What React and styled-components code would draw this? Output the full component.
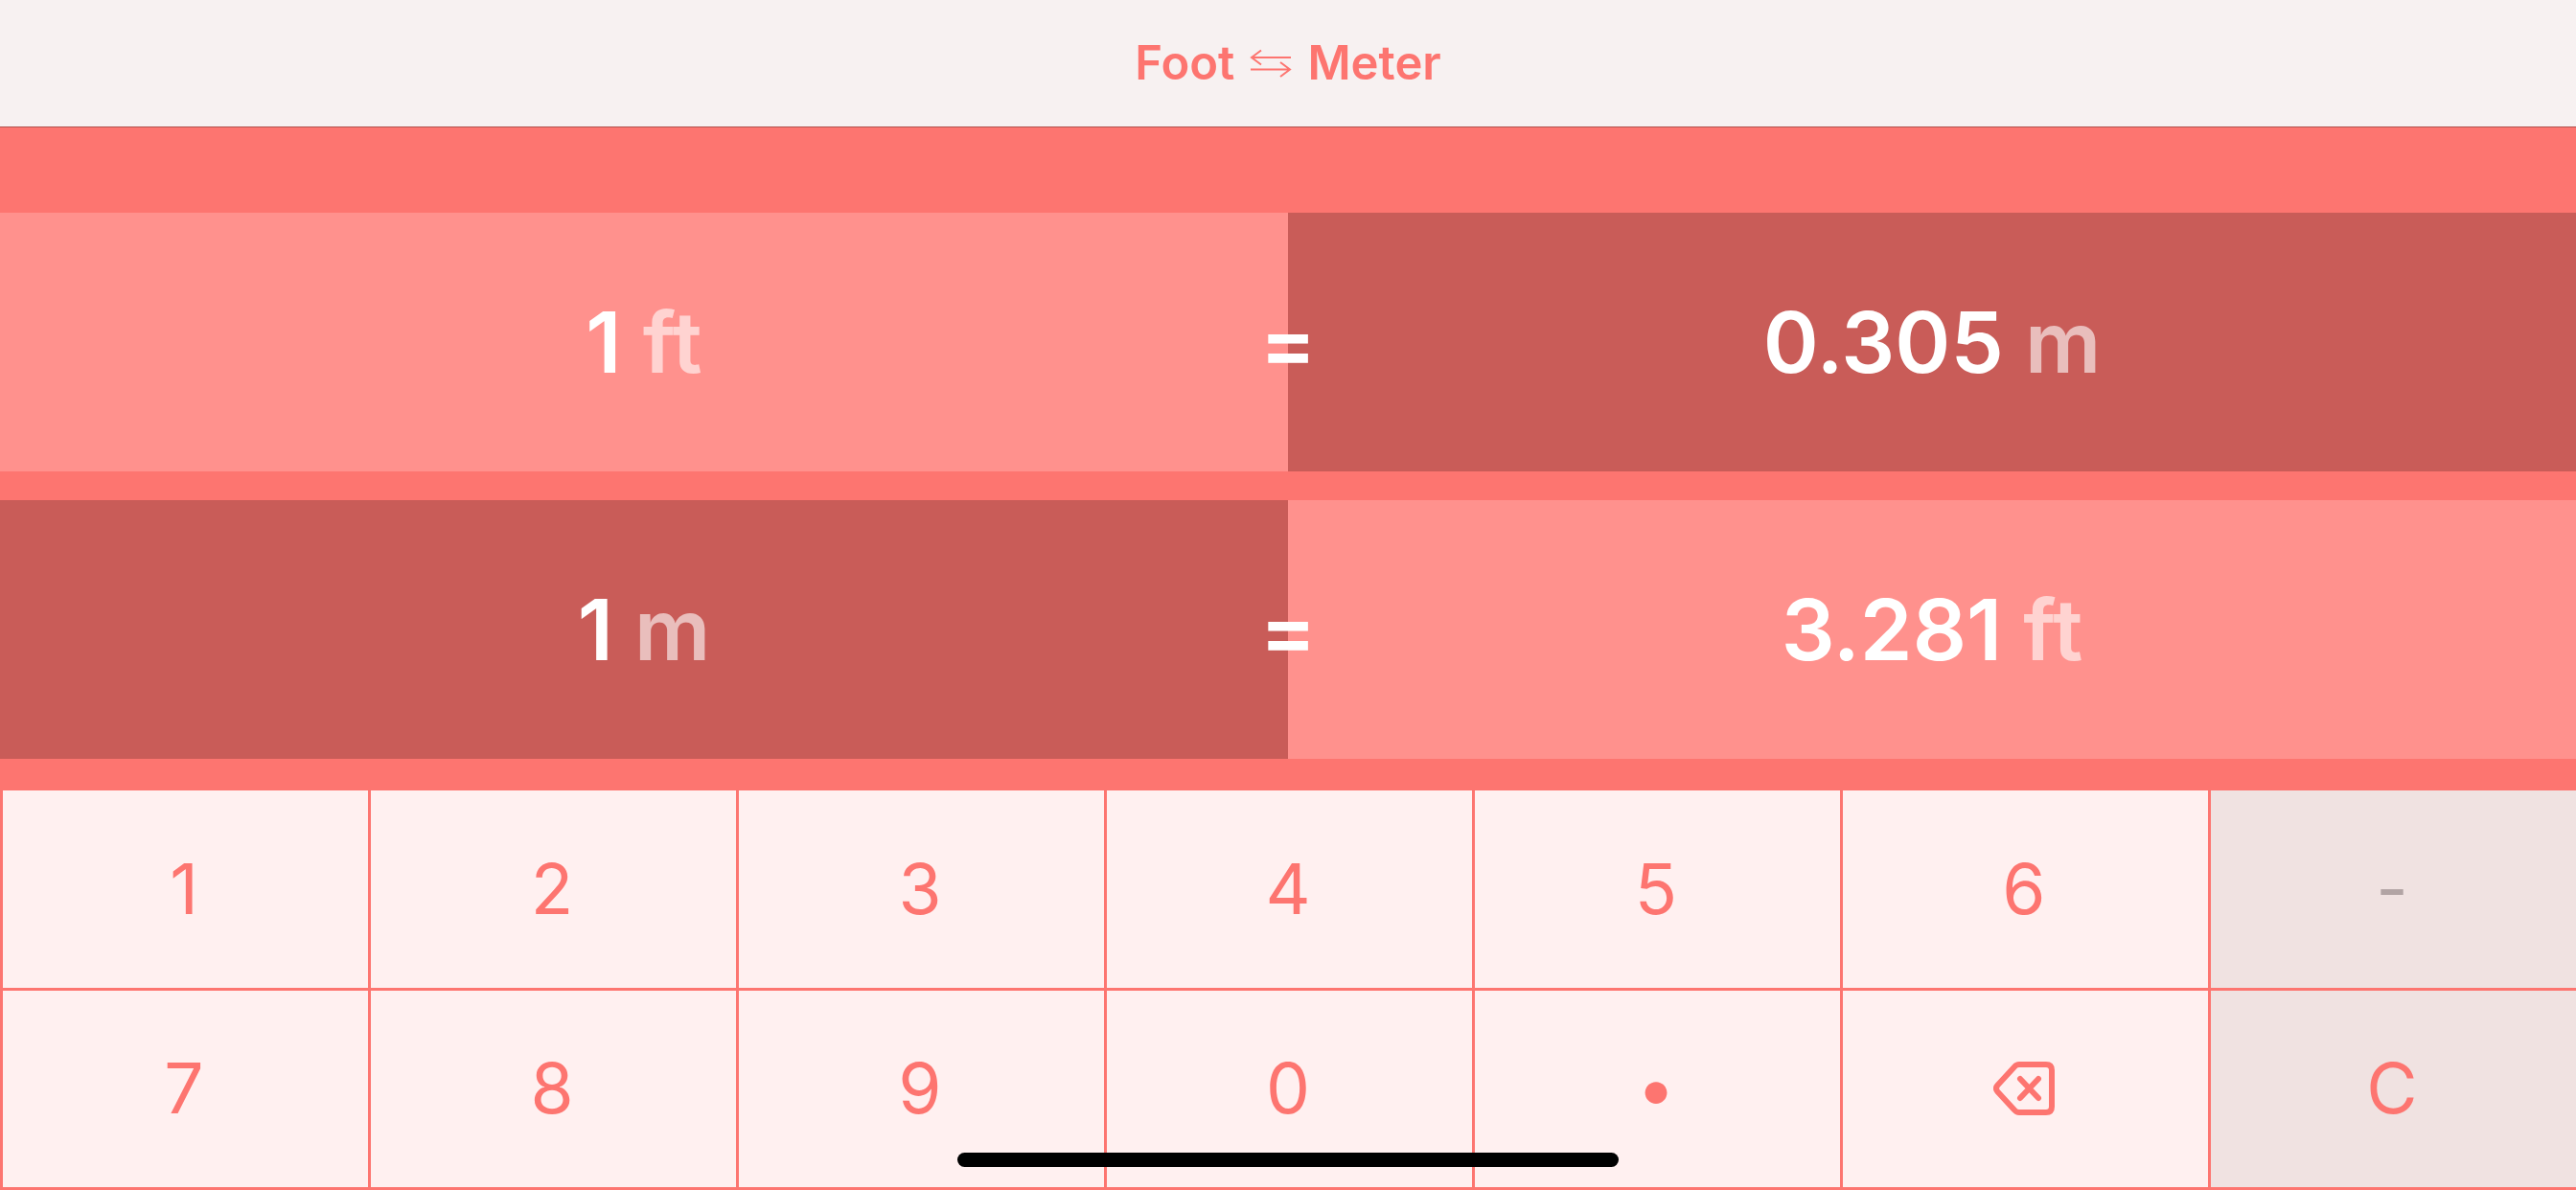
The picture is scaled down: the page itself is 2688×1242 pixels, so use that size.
import React, { useState } from 'react'
import styled, { createGlobalStyle } from 'styled-components'

const METERS_PER_FOOT = 0.3048

const GlobalStyle = createGlobalStyle`
	* {
		box-sizing: border-box;
	}
	body {
		margin: 0;
		background: #fd7570;
		font-family: Inter, 'Liberation Sans', sans-serif;
	}
`

const Page = styled.div`
	position: relative;
	min-height: 100vh;
	display: flex;
	flex-direction: column;
	background: #fd7570;
`

const Header = styled.header`
	display: flex;
	justify-content: center;
	padding: 36px;
	background: #f7f1f1;
	border-bottom: 1px solid #b1524e;
`

const Title = styled.h1`
	display: flex;
	align-items: center;
	gap: 16px;
	margin: 0;
	font-size: 49px;
	line-height: 60px;
	font-weight: 600;
	color: #fd7570;
`

const Conversions = styled.main`
	display: flex;
	flex-direction: column;
	gap: 30px;
	padding: 89px 0 30px;
`

const Equation = styled.section`
	position: relative;
	display: grid;
	grid-template-columns: 1fr 1fr;
	font-size: 88px;
	line-height: 110px;
	font-weight: 600;
	color: #fff;
`

const Side = styled.div`
	padding: 80px 0;
	text-align: center;
	background: ${({ $dark }) => ($dark ? '#c95c58' : '#ff918d')};
`

const Unit = styled.span`
	color: rgba(255, 255, 255, 0.6);
`

const Equals = styled.span`
	position: absolute;
	inset: 0;
	display: flex;
	align-items: center;
	justify-content: center;
	pointer-events: none;
`

const Keypad = styled.div`
	flex: 1;
	display: grid;
	grid-template-columns: repeat(7, 1fr);
	grid-auto-rows: 1fr;
	border-top: 3px solid #fd7570;
`

const Key = styled.button`
	display: flex;
	align-items: center;
	justify-content: center;
	margin: 0;
	padding: 0 3px 0 0;
	border: 0 solid #fd7570;
	border-width: 0 0 3px 3px;
	background: ${({ $muted }) => ($muted ? '#f0e2e1' : '#fff0f0')};
	font-family: inherit;
	font-size: 73px;
	line-height: 90px;
	font-weight: 400;
	color: #fd7570;
	cursor: pointer;
	&:disabled {
		color: #b2a4a4;
		cursor: default;
	}
`

const HomeIndicator = styled.div`
	position: absolute;
	left: 50%;
	bottom: 24px;
	width: 690px;
	height: 15px;
	margin-left: -345px;
	border-radius: 8px;
	background: #000;
`

function SwapIcon() {
	return (
		<svg width="44" height="30" viewBox="0 0 44 30" fill="none" stroke="currentColor" strokeWidth="2" role="img" aria-label="to and from">
			<path d="M43 9H2M12 1.500L2 9l10 7.500" />
			<path d="M1 21.500h41M32 14l10 7.500L32 29" />
		</svg>
	)
}

function BackspaceIcon() {
	return (
		<svg width="64" height="56" viewBox="0 0 64 56" fill="none" stroke="currentColor" strokeWidth="6" strokeLinecap="round" strokeLinejoin="round">
			<path d="M27 3h28q6 0 6 6v38q0 6-6 6H27q-3 0-5-2.500L4.500 31.500q-3-3.500 0-7L22 5.500Q24 3 27 3z" />
			<path d="M28 18l19 20M47 18L28 38" />
		</svg>
	)
}

const KEYS = [
	{ id: '1' },
	{ id: '2' },
	{ id: '3' },
	{ id: '4' },
	{ id: '5' },
	{ id: '6' },
	{ id: '-', muted: true, disabled: true, name: 'Minus' },
	{ id: '7' },
	{ id: '8' },
	{ id: '9' },
	{ id: '0' },
	{ id: '.', label: '•', name: 'Decimal point' },
	{ id: 'back', label: <BackspaceIcon />, name: 'Backspace' },
	{ id: 'C', muted: true, name: 'Clear' },
]

const format = (n) => String(Number(n.toFixed(3)))

function Conversion({ entry, from, result, to, flipped = false }) {
	return (
		<Equation>
			<Side $dark={flipped}>
				{entry} <Unit>{from}</Unit>
			</Side>
			<Side $dark={!flipped}>
				{result} <Unit>{to}</Unit>
			</Side>
			<Equals>=</Equals>
		</Equation>
	)
}

function App() {
	const [entry, setEntry] = useState('1')
	const value = Number(entry)

	const press = (id) => {
		if (id === 'C') return setEntry('0')
		if (id === 'back') return setEntry(entry.slice(0, -1) || '0')
		if (id === '.' && entry.includes('.')) return
		setEntry(entry === '0' && id !== '.' ? id : entry + id)
	}

	return (
		<Page>
			<GlobalStyle />
			<Header>
				<Title>
					<span>Foot</span>
					<SwapIcon />
					<span>Meter</span>
				</Title>
			</Header>
			<Conversions>
				<Conversion entry={entry} from="ft" result={format(value * METERS_PER_FOOT)} to="m" />
				<Conversion entry={entry} from="m" result={format(value / METERS_PER_FOOT)} to="ft" flipped />
			</Conversions>
			<Keypad>
				{KEYS.map(({ id, label, name, muted, disabled }) => (
					<Key key={id} type="button" aria-label={name} $muted={muted} disabled={disabled} onClick={() => press(id)}>
						{label || id}
					</Key>
				))}
			</Keypad>
			<HomeIndicator />
		</Page>
	)
}

export default App
